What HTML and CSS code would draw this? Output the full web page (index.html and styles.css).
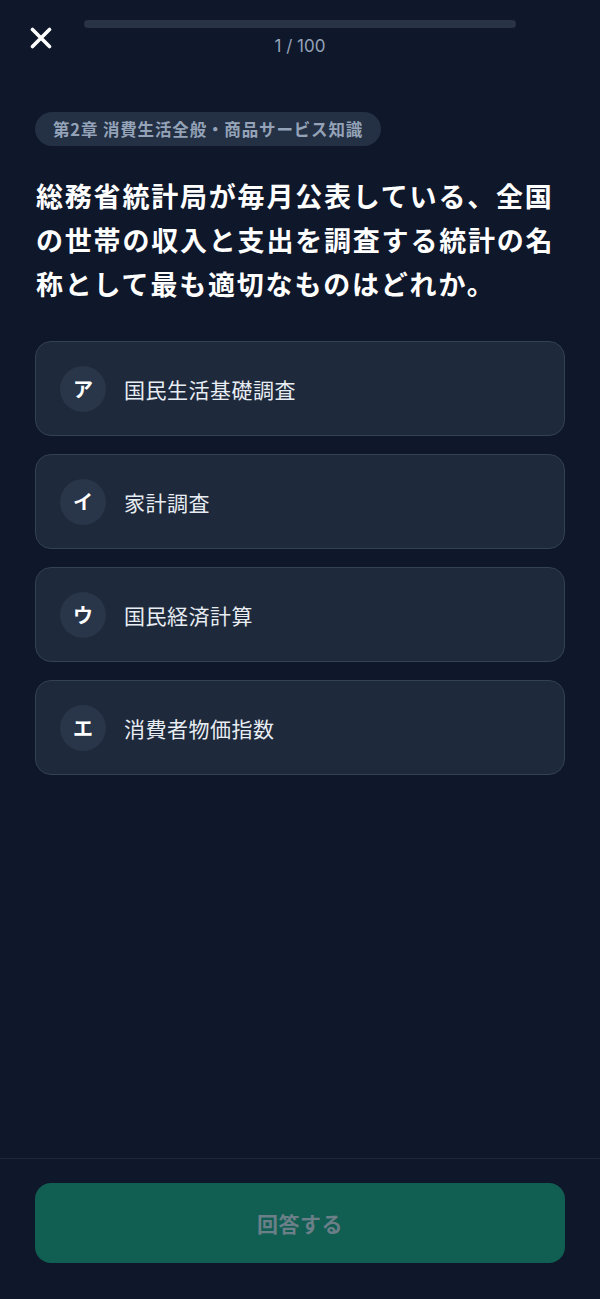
FILE: index.html
```html
<!DOCTYPE html>
<html lang="ja">
<head>
<meta charset="utf-8">
<title>Quiz</title>
<link rel="stylesheet" href="styles.css">
</head>
<body>
<div class="app">
  <header class="header">
    <div class="close-cell">
      <button class="close" aria-label="閉じる">
        <svg width="22" height="22" viewBox="0 0 22 22"><path d="M2.5 2.5 L19.5 19.5 M19.5 2.5 L2.5 19.5" stroke="#ffffff" stroke-width="3.6" stroke-linecap="round" fill="none"/></svg>
      </button>
    </div>
    <div class="progress">
      <div class="bar"></div>
      <div class="count">1 / 100</div>
    </div>
    <div></div>
  </header>

  <main class="main">
    <span class="chip">第2章 消費生活全般・商品サービス知識</span>
    <h1 class="question">総務省統計局が毎月公表している、全国の世帯の収入と支出を調査する統計の名称として最も適切なものはどれか。</h1>
    <ul class="options">
      <li class="option"><span class="mark">ア</span><span class="label">国民生活基礎調査</span></li>
      <li class="option"><span class="mark">イ</span><span class="label">家計調査</span></li>
      <li class="option"><span class="mark">ウ</span><span class="label">国民経済計算</span></li>
      <li class="option"><span class="mark">エ</span><span class="label">消費者物価指数</span></li>
    </ul>
  </main>

  <footer class="footer">
    <button class="submit" disabled>回答する</button>
  </footer>
</div>
</body>
</html>
```

FILE: styles.css
```css
* { box-sizing: border-box; }
html, body {
  margin: 0;
  padding: 0;
  background: #0f172a;
}
body {
  font-family: "Noto Sans CJK JP", "Noto Sans", sans-serif;
  color: #ffffff;
}
.app {
  height: 1299px;
  display: flex;
  flex-direction: column;
}
.header {
  display: grid;
  grid-template-columns: 84px 1fr 84px;
  padding-top: 20px;
}
.close-cell {
  padding-left: 30px;
  padding-top: 7px;
}
.close {
  width: 22px;
  height: 22px;
  padding: 0;
  border: 0;
  background: none;
  display: block;
}
.close svg { display: block; }
.progress {
  display: flex;
  flex-direction: column;
  align-items: center;
  gap: 8px;
}
.bar {
  width: 100%;
  height: 8px;
  border-radius: 4px;
  background: #283345;
}
.count {
  font-family: "Inter", "Noto Sans", sans-serif;
  font-size: 17px;
  line-height: 20px;
  color: #94a3b8;
}
.main {
  flex: 1;
  padding: 56px 35px 0;
}
.chip {
  display: inline-flex;
  align-items: center;
  height: 34px;
  padding: 0 18px;
  border-radius: 17px;
  background: #243044;
  color: #94a3b8;
  font-size: 16.5px;
  font-weight: 700;
  letter-spacing: 0.85px;
}
.question {
  margin: 28px 0 0;
  padding-left: 1px;
  font-size: 27px;
  line-height: 44px;
  letter-spacing: 1.8px;
  font-weight: 700;
  color: #ffffff;
}
.options {
  list-style: none;
  margin: 35px 0 0;
  padding: 0;
  display: flex;
  flex-direction: column;
  gap: 18px;
}
.option {
  height: 95px;
  display: flex;
  align-items: center;
  gap: 18px;
  padding: 0 24px;
  border: 1px solid #334155;
  border-radius: 16px;
  background: #1e293b;
}
.mark {
  width: 46px;
  height: 46px;
  border-radius: 50%;
  background: #293548;
  display: flex;
  align-items: center;
  justify-content: center;
  font-size: 20px;
  font-weight: 700;
  color: #ffffff;
  flex: none;
}
.label {
  font-size: 21px;
  letter-spacing: 0.5px;
  color: #e8edf3;
}
.footer {
  border-top: 1px solid #1e293b;
  padding: 24px 35px 36px;
}
.submit {
  width: 100%;
  height: 80px;
  border: 0;
  border-radius: 16px;
  background: #115e52;
  color: #6b7f88;
  font-family: "Noto Sans CJK JP", "Noto Sans", sans-serif;
  font-size: 21px;
  font-weight: 700;
  letter-spacing: 0.5px;
}
```
